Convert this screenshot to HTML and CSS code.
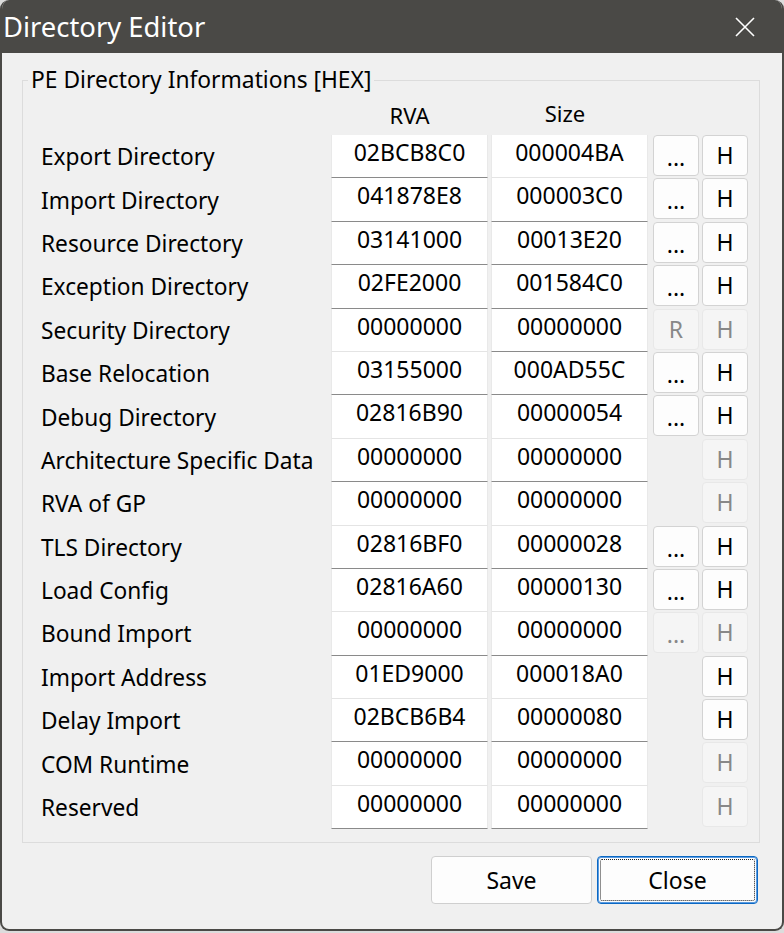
FILE: index.html
```html
<!DOCTYPE html>
<html lang="en">
<head>
  <meta charset="UTF-8">
  <title>Directory Editor</title>
  <link rel="stylesheet" href="styles.css">
</head>
<body>
  <div class="window">
    <div class="titlebar">
      <span class="title">Directory Editor</span>
      <svg class="close-x" width="20" height="20" viewBox="0 0 20 20">
        <path d="M1 1 L19 19 M19 1 L1 19" stroke="#fff" stroke-width="1.6" fill="none"/>
      </svg>
    </div>

    <div class="content">
      <fieldset class="group">
        <legend>PE Directory Informations [HEX]</legend>

        <div class="grid">
          <!-- headers -->
          <div class="head-row"></div>
          <div class="head-row">RVA</div>
          <div class="head-row size-head">Size</div>
          <div class="head-row"></div>
          <div class="head-row"></div>

          <!-- Export -->
          <div class="name">Export Directory</div>
          <div class="box u">02BCB8C0</div>
          <div class="box">000004BA</div>
          <div class="btn-cell"><button class="btn dots">...</button></div>
          <div class="btn-cell"><button class="btn">H</button></div>

          <!-- Import -->
          <div class="name">Import Directory</div>
          <div class="box u">041878E8</div>
          <div class="box u">000003C0</div>
          <div class="btn-cell"><button class="btn dots">...</button></div>
          <div class="btn-cell"><button class="btn">H</button></div>

          <!-- Resource -->
          <div class="name">Resource Directory</div>
          <div class="box u">03141000</div>
          <div class="box u">00013E20</div>
          <div class="btn-cell"><button class="btn dots">...</button></div>
          <div class="btn-cell"><button class="btn">H</button></div>

          <!-- Exception -->
          <div class="name">Exception Directory</div>
          <div class="box u">02FE2000</div>
          <div class="box u">001584C0</div>
          <div class="btn-cell"><button class="btn dots">...</button></div>
          <div class="btn-cell"><button class="btn">H</button></div>

          <!-- Security -->
          <div class="name">Security Directory</div>
          <div class="box">00000000</div>
          <div class="box u">00000000</div>
          <div class="btn-cell"><button class="btn off">R</button></div>
          <div class="btn-cell"><button class="btn off">H</button></div>

          <!-- Base reloc -->
          <div class="name">Base Relocation</div>
          <div class="box u">03155000</div>
          <div class="box u">000AD55C</div>
          <div class="btn-cell"><button class="btn dots">...</button></div>
          <div class="btn-cell"><button class="btn">H</button></div>

          <!-- Debug -->
          <div class="name">Debug Directory</div>
          <div class="box">02816B90</div>
          <div class="box">00000054</div>
          <div class="btn-cell"><button class="btn dots">...</button></div>
          <div class="btn-cell"><button class="btn">H</button></div>

          <!-- Architecture -->
          <div class="name">Architecture Specific Data</div>
          <div class="box u">00000000</div>
          <div class="box u">00000000</div>
          <div class="btn-cell"></div>
          <div class="btn-cell"><button class="btn off">H</button></div>

          <!-- GP -->
          <div class="name">RVA of GP</div>
          <div class="box">00000000</div>
          <div class="box">00000000</div>
          <div class="btn-cell"></div>
          <div class="btn-cell"><button class="btn off">H</button></div>

          <!-- TLS -->
          <div class="name">TLS Directory</div>
          <div class="box u">02816BF0</div>
          <div class="box u">00000028</div>
          <div class="btn-cell"><button class="btn dots">...</button></div>
          <div class="btn-cell"><button class="btn">H</button></div>

          <!-- Load config -->
          <div class="name">Load Config</div>
          <div class="box">02816A60</div>
          <div class="box">00000130</div>
          <div class="btn-cell"><button class="btn dots">...</button></div>
          <div class="btn-cell"><button class="btn">H</button></div>

          <!-- Bound import -->
          <div class="name">Bound Import</div>
          <div class="box u">00000000</div>
          <div class="box u">00000000</div>
          <div class="btn-cell"><button class="btn dots off">...</button></div>
          <div class="btn-cell"><button class="btn off">H</button></div>

          <!-- IAT -->
          <div class="name">Import Address</div>
          <div class="box">01ED9000</div>
          <div class="box">000018A0</div>
          <div class="btn-cell"></div>
          <div class="btn-cell"><button class="btn">H</button></div>

          <!-- Delay -->
          <div class="name">Delay Import</div>
          <div class="box u">02BCB6B4</div>
          <div class="box u">00000080</div>
          <div class="btn-cell"></div>
          <div class="btn-cell"><button class="btn">H</button></div>

          <!-- COM -->
          <div class="name">COM Runtime</div>
          <div class="box">00000000</div>
          <div class="box">00000000</div>
          <div class="btn-cell"></div>
          <div class="btn-cell"><button class="btn off">H</button></div>

          <!-- Reserved -->
          <div class="name">Reserved</div>
          <div class="box u">00000000</div>
          <div class="box u">00000000</div>
          <div class="btn-cell"></div>
          <div class="btn-cell"><button class="btn off">H</button></div>
        </div>
      </fieldset>

      <div class="footer">
        <button class="big-btn">Save</button>
        <button class="big-btn focused">Close</button>
      </div>
    </div>
  </div>
</body>
</html>
```

FILE: styles.css
```css
body {
  margin: 0;
  background: #dcdcdc;
  font-family: "Noto Sans", sans-serif;
}
.window {
  width: 784px;
  height: 931px;
  box-sizing: border-box;
  background: #f0f0f0;
  border: 2px solid #4a4946;
  border-top: 0;
  border-radius: 9px;
  overflow: hidden;
  display: flex;
  flex-direction: column;
}
.titlebar {
  height: 53px;
  background: #4a4946;
  display: flex;
  align-items: center;
  justify-content: space-between;
  padding: 0 29px 0 3px;
  margin: 0 -2px;
  flex-shrink: 0;
}
.title {
  color: #fff;
  font-size: 27.4px;
  line-height: 53px;
}
.content {
  padding: 13px 22px 0 20px;
}
.group {
  margin: 0;
  border: 1px solid #dcdcdc;
  padding: 0 13px 13px 5px;
  min-width: 0;
}
.group legend {
  padding: 0 3px;
  font-size: 22.8px;
  line-height: 28px;
  color: #000;
}
.grid {
  margin-left: 13px;
  display: grid;
  grid-template-columns: 287px 157px 157px 48px 46px;
  grid-template-rows: 41px;
  grid-auto-rows: 43.4px;
  column-gap: 3px;
}
.head-row {
  font-size: 22px;
  text-align: center;
  line-height: 36px;
  padding-top: 3px;
}
.size-head {
  padding-right: 9px;
  line-height: 32px;
}
.name {
  font-size: 22.7px;
  display: flex;
  align-items: center;
}
.box {
  background: #fff;
  border: 1px solid #e9e9e9;
  border-top: 0;
  border-bottom-color: #e4e4e4;
  text-align: center;
  font-size: 23px;
  line-height: 34px;
}
.box.u {
  border-bottom-color: #8a8a8a;
}
.btn-cell {
  display: flex;
  justify-content: flex-end;
  align-items: flex-start;
}
.btn {
  width: 46px;
  height: 41px;
  box-sizing: border-box;
  border: 1px solid #d3d3d3;
  border-radius: 4px;
  background: #fdfdfd;
  font-family: inherit;
  font-size: 23px;
  color: #000;
  padding: 0;
  line-height: 39px;
}
.btn.dots {
  line-height: 43px;
}
.btn.off {
  background: #f5f5f5;
  border-color: #e8e8e8;
  color: #888;
}
.footer {
  display: flex;
  justify-content: flex-end;
  gap: 5px;
  margin-top: 13px;
  padding-right: 2px;
}
.big-btn {
  width: 161px;
  height: 48px;
  border: 1px solid #cfcfcf;
  border-radius: 4px;
  background: #fdfdfd;
  font-family: inherit;
  font-size: 23px;
  color: #000;
  padding: 0;
}
.big-btn.focused {
  position: relative;
  border: 1px solid #0b68c4;
  box-shadow: inset 0 0 0 1px #5a9be0;
}
.big-btn.focused::after {
  content: "";
  position: absolute;
  inset: 2px;
  border: 1px dotted #222;
  border-radius: 2px;
}
```
